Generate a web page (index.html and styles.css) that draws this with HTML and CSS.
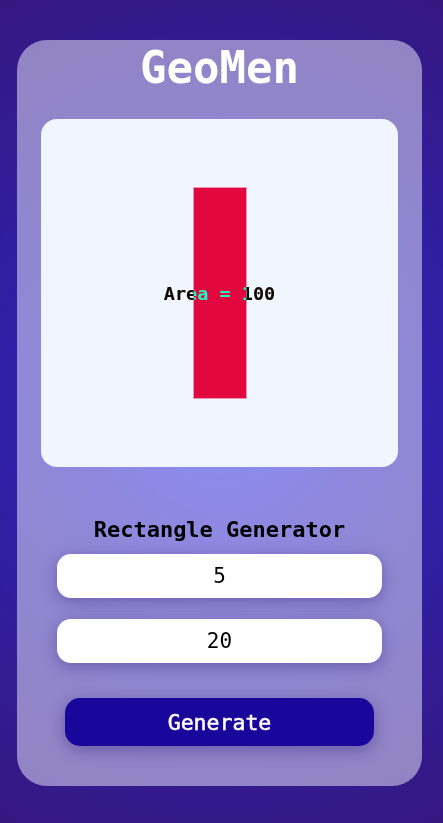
FILE: index.html
```html
<!DOCTYPE html>
<html>
<head>
<meta charset="utf-8">
<link rel="stylesheet" href="styles.css">
</head>
<body>
<main class="card">
  <h1 class="title">GeoMen</h1>
  <section class="canvas">
    <div class="rect"></div>
    <div class="area">Area = 100</div>
  </section>
  <h2 class="subtitle">Rectangle Generator</h2>
  <input class="field" type="text" value="5">
  <input class="field field-second" type="text" value="20">
  <button class="btn">Generate</button>
</main>
</body>
</html>
```

FILE: styles.css
```css
html, body {
  margin: 0;
  padding: 0;
}
body {
  width: 443px;
  height: 823px;
  overflow: hidden;
  font-family: "DejaVu Sans Mono", monospace;
  background: radial-gradient(circle at 50% 50%, #2626e6 0%, #3020a8 45%, #35177f 100%);
  padding: 40px 21px 37px 17px;
  box-sizing: border-box;
}
.card {
  width: 405px;
  height: 746px;
  box-sizing: border-box;
  border-radius: 30px;
  background: rgba(240, 240, 255, 0.5);
  display: flex;
  flex-direction: column;
  align-items: center;
}
.title {
  margin: 0;
  font-size: 44px;
  line-height: 56px;
  font-weight: bold;
  color: #fff;
}
.canvas {
  position: relative;
  margin-top: 23px;
  width: 357px;
  height: 348px;
  border-radius: 16px;
  background: #eff6ff;
  display: flex;
  align-items: center;
  justify-content: center;
}
.rect {
  width: 52px;
  height: 210px;
  background: #e2083f;
  box-shadow: 0 0 0 1px rgba(226, 8, 63, 0.4);
}
.area {
  position: absolute;
  left: 0;
  right: 0;
  top: 50%;
  transform: translateY(-50%);
  text-align: center;
  font-size: 18.5px;
  font-weight: bold;
  color: #fff;
  mix-blend-mode: difference;
}
.subtitle {
  margin: 48px 0 0;
  font-size: 22px;
  line-height: 30px;
  font-weight: bold;
  color: #000;
}
.field {
  margin-top: 9px;
  width: 325px;
  height: 44px;
  box-sizing: border-box;
  border: none;
  border-radius: 14px;
  background: #fff;
  text-align: center;
  font-family: "DejaVu Sans Mono", monospace;
  font-size: 21px;
  color: #000;
  box-shadow: 0 4px 16px rgba(40, 20, 110, 0.35);
  outline: none;
}
.field-second {
  margin-top: 21px;
}
.btn {
  margin-top: 35px;
  width: 309px;
  height: 48px;
  border: none;
  border-radius: 15px;
  background: #19069a;
  color: #fff;
  font-family: "DejaVu Sans Mono", monospace;
  font-size: 21.5px;
  font-weight: normal;
  -webkit-text-stroke: 0.5px #fff;
  box-shadow: 0 4px 16px rgba(40, 20, 110, 0.4);
}
```
